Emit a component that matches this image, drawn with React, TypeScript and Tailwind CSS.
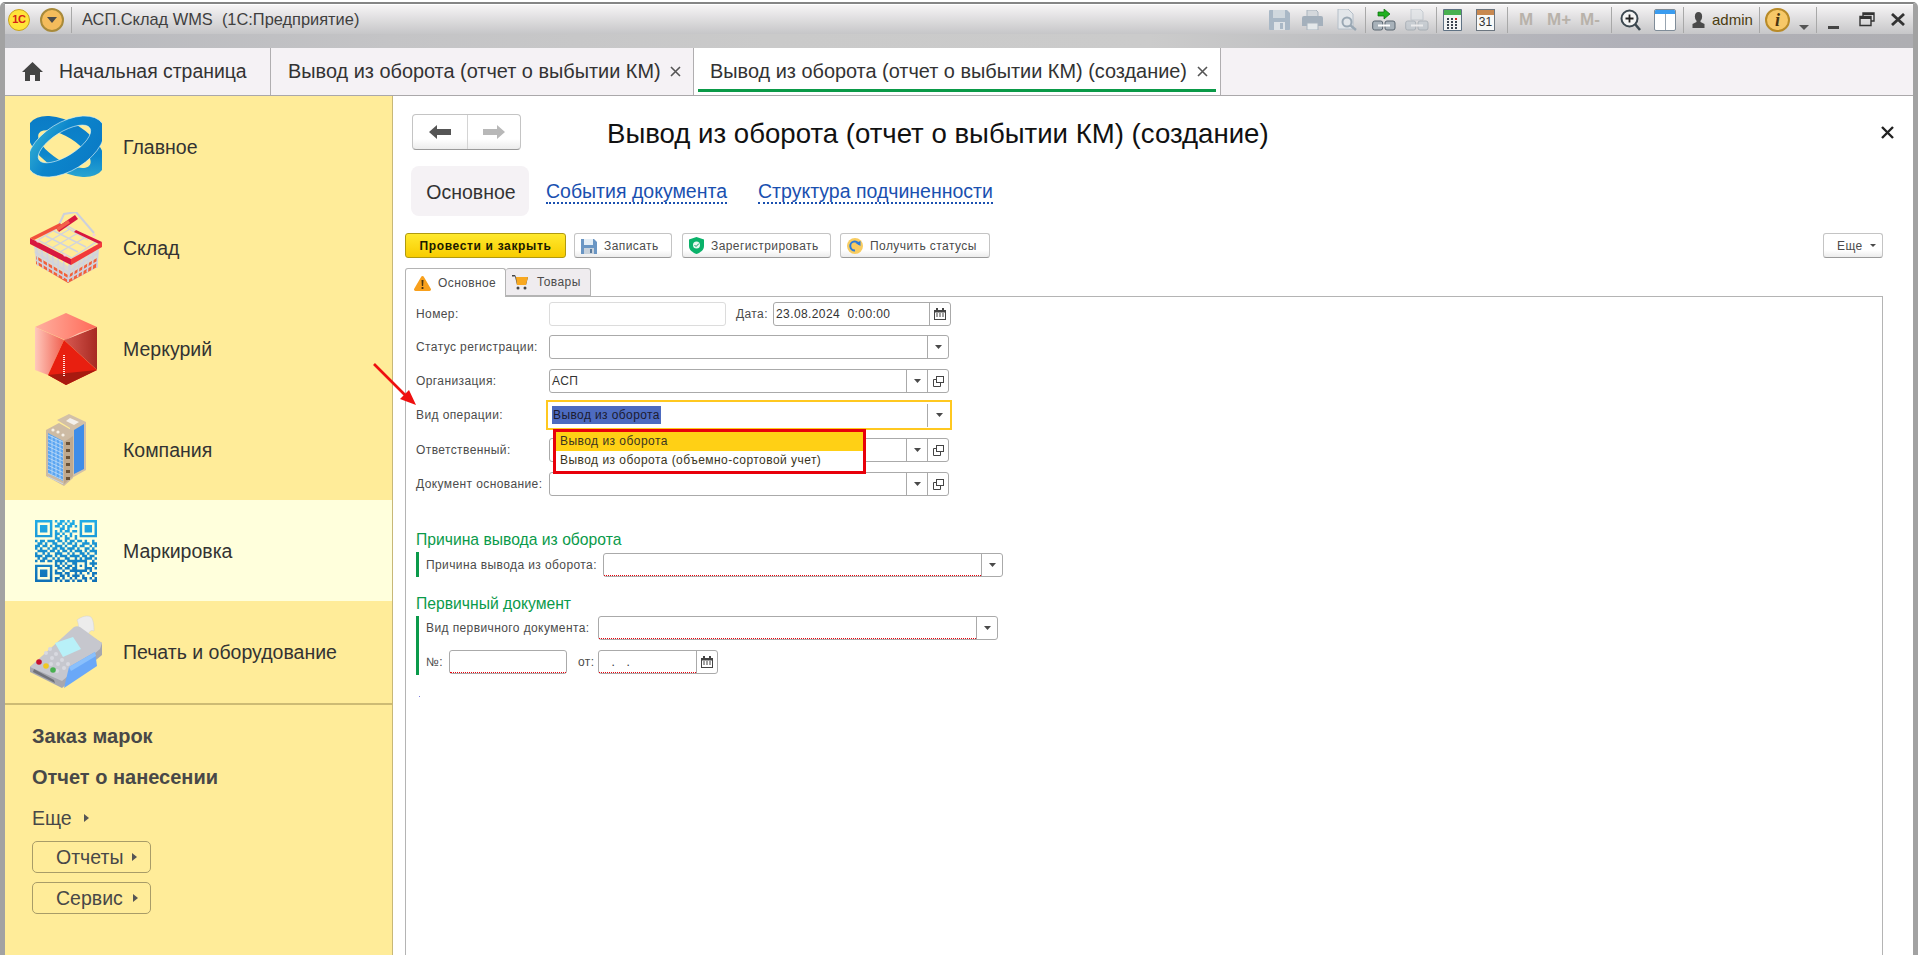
import type { ReactNode } from "react";

const Drop = () => (
  <svg width="7" height="4" viewBox="0 0 7 4"><path d="M0 0h7L3.5 4z" fill="#4a4a4a" /></svg>
);

const OpenIcon = () => (
  <svg width="11" height="11" viewBox="0 0 11 11" fill="none" stroke="#444" strokeWidth="1">
    <rect x="3.5" y="0.5" width="7" height="6" />
    <path d="M3.5 3.5h-3v7h7v-3.5" />
  </svg>
);

const CalendarIcon = () => (
  <svg width="12" height="12" viewBox="0 0 12 12">
    <path d="M0 2h12v10H0z" fill="#444" />
    <path d="M2 0h2v2H2zM8 0h2v2H8z" fill="#444" />
    <path d="M1 4.5h10V11H1z" fill="#fff" />
    <path d="M2 5.5h2v1H2zM5 5.5h2v1H5zM8 5.5h2v1H8zM2 7.5h2v1H2zM5 7.5h2v1H5zM8 7.5h2v1H8z" fill="#444" />
  </svg>
);

function Field({
  className,
  text,
  buttons = [],
  required,
  light,
}: {
  className: string;
  text?: ReactNode;
  buttons?: ("drop" | "open" | "cal")[];
  required?: boolean;
  light?: boolean;
}) {
  return (
    <div className={`flex h-[24px] shrink-0 rounded-[3px] border bg-white ${light ? "border-[#dcdcdc]" : "border-[#aaaaaa]"} ${className}`}>
      <div className="relative flex min-w-0 flex-1 items-center pl-[2px] whitespace-pre text-[#333]">
        {text}
        {required && <div className="absolute right-0 bottom-0 left-0 border-b border-dotted border-[#e8000a]" />}
      </div>
      {buttons.map((b, i) => (
        <div key={i} className="flex w-[21px] items-center justify-center border-l border-[#aaaaaa]">
          {b === "drop" && <Drop />}
          {b === "open" && <OpenIcon />}
          {b === "cal" && <CalendarIcon />}
        </div>
      ))}
    </div>
  );
}

const Label = ({ className, children }: { className: string; children: ReactNode }) => (
  <div className={`shrink-0 whitespace-nowrap text-[#4b4b4b] ${className}`}>{children}</div>
);

function GlobeIcon() {
  const ring = "M-43 0A43 24 0 1 1 43 0A43 24 0 1 1-43 0ZM-30 3A30 12 0 1 0 30 3A30 12 0 1 0-30 3Z";
  return (
    <svg width="72" height="63" viewBox="0 0 72 63">
      <defs>
        <linearGradient id="gb" x1="0" y1="0" x2="1" y2="1">
          <stop offset="0" stopColor="#0a78c4" />
          <stop offset="0.6" stopColor="#0c86cc" />
          <stop offset="1" stopColor="#3bb6d4" />
        </linearGradient>
      </defs>
      <g transform="translate(36 31.500)">
        <path d={ring} fill="url(#gb)" fillRule="evenodd" transform="rotate(32)" />
        <path d={ring} fill="url(#gb)" fillRule="evenodd" stroke="#d8f0f4" strokeWidth="0.6" transform="rotate(148)" />
      </g>
    </svg>
  );
}

function BasketIcon() {
  const wires = [];
  for (let i = 0; i < 7; i++) {
    wires.push(<path key={`a${i}`} d={`M${6 + i * 5.6} ${28 + i * 3.4}L${8 + i * 5} ${54 + i * 2.6}`} />);
    wires.push(<path key={`b${i}`} d={`M${41 + i * 4.6} ${50 - i * 3.2}L${38 + i * 4.8} ${70 - i * 2.4}`} />);
  }
  return (
    <svg width="72" height="72" viewBox="0 0 72 72">
      <path d="M28 15L34 2L46 0L64 21" fill="none" stroke="#ccd0dc" strokeWidth="2" />
      <g stroke="#d0d3de" strokeWidth="1.4" fill="none">
        <path d="M8 28L34 12L66 30L42 46Z" />
        <path d="M16 24L48 40M24 19L56 35M34 14L58 28M14 32L40 17M22 36L48 21M30 40L56 25" />
      </g>
      <path d="M4 34L38 54L68 34L68 55L38 71L6 52Z" fill="#d0d3de" opacity="0.75" />
      <path d="M6 44L38 63L67 46L67 55L38 71L6 52Z" fill="#f2603a" />
      <g stroke="#d0d3de" strokeWidth="1.6" fill="none">
        {wires}
        <path d="M5 40L38 60L68 41M6 48L38 67L67 50" />
      </g>
      <path d="M0 26L41 47V53L0 32Z" fill="#d8183f" />
      <path d="M41 47L72 30V35L41 53Z" fill="#f23a3a" />
      <path d="M0 26L30 11L32 14L4 28Z" fill="#f2503c" />
      <path d="M46 18L72 30L69 32L44 20Z" fill="#d8183f" />
      <path d="M26 16L45 3L48 7L29 20Z" fill="#d8183f" />
      <path d="M26 16L38 8L40 11L28 19Z" fill="#f2604a" />
      <circle cx="8" cy="29" r="1.6" fill="#f8d0d8" />
      <circle cx="35" cy="43" r="1.6" fill="#f8d0d8" />
      <circle cx="64" cy="23" r="1.6" fill="#f8d0d8" />
    </svg>
  );
}

function CubeIcon() {
  return (
    <svg width="62" height="72" viewBox="0 0 62 72">
      <defs>
        <linearGradient id="c1" x1="0" y1="0" x2="1" y2="0"><stop offset="0" stopColor="#ffb0a0" /><stop offset="1" stopColor="#ff6a58" /></linearGradient>
        <linearGradient id="c2" x1="0" y1="0" x2="1" y2="0"><stop offset="0" stopColor="#d85a52" /><stop offset="1" stopColor="#a82a22" /></linearGradient>
        <linearGradient id="c3" x1="0" y1="0" x2="1" y2="0"><stop offset="0" stopColor="#ffc8bc" /><stop offset="1" stopColor="#f06050" /></linearGradient>
      </defs>
      <path d="M31 0L62 14L30 27L0 14Z" fill="url(#c1)" />
      <path d="M62 14V57L29 27Z" fill="url(#c2)" />
      <path d="M0 14L29 27L13 62L0 57Z" fill="url(#c3)" />
      <path d="M29 27L62 57L31 72L13 62Z" fill="#e81f10" />
      <path d="M13 62L62 57L31 72Z" fill="#a81a10" />
      <path d="M30 27L62 14L44 20Z" fill="#ffe0c8" opacity="0.8" />
      <path d="M29 42V63" stroke="#ffe6e0" strokeWidth="2" strokeDasharray="1 1" />
    </svg>
  );
}

function BuildingIcon() {
  const front = [];
  for (let r = 0; r < 12; r++) {
    front.push(<path key={r} d={`M2 ${21 + r * 3.8}L17 ${28 + r * 3.8}`} stroke="#cfe4f8" strokeWidth="0.7" />);
  }
  return (
    <svg width="40" height="72" viewBox="0 0 40 72">
      <path d="M11 6L23 0L40 8V56L24 65V14Z" fill="#d2c0a8" />
      <path d="M28 16L38 10V55L28 60Z" fill="#3f8de8" />
      <path d="M0 16L13 9L27 17V64L18 72L0 62Z" fill="#cdbba4" />
      <path d="M2 19L17 27V67L2 59Z" fill="#5aa5f2" />
      {front}
      <path d="M6 22V60M10 24V62M14 26V65" stroke="#cfe4f8" strokeWidth="0.7" />
      <path d="M18 28L27 22V62L18 70Z" fill="#bfa98e" />
      <path d="M20 28h4v3h-4zM20 35h4v3h-4zM20 42h4v3h-4zM20 49h4v3h-4zM20 56h4v3h-4zM20 63h4v3h-4z" fill="#6a5238" />
      <path d="M24 4L33 8L28 11L20 7Z" fill="#f4f0ea" />
      <circle cx="7" cy="16" r="1.6" fill="#f6f0e6" />
      <circle cx="12" cy="18" r="1.6" fill="#f6f0e6" />
      <circle cx="17" cy="21" r="1.6" fill="#f6f0e6" />
    </svg>
  );
}

const QR_ROWS = [
  "1111111010110101001111111",
  "1000001001101011001000001",
  "1011101011010110101011101",
  "1011101000110100001011101",
  "1011101010101101101011101",
  "1000001011010010001000001",
  "1111111010101010101111111",
  "0000000011001100100000000",
  "1011011101101011011010010",
  "0110100110010110100111011",
  "1101101011101001101100101",
  "1010010110110111010011010",
  "0111101101011010111010111",
  "1001010011100101001101001",
  "1110111010111011110110110",
  "0101100101001100101011101",
  "1011011011110111111110010",
  "0000000010101001100010111",
  "1111111011010110101010010",
  "1000001001101101100011101",
  "1011101010010011111110100",
  "1011101011101100101001011",
  "1011101000110101110100010",
  "1000001011010010100110101",
  "1111111010101101011010011",
];

function QrIcon() {
  let d = "";
  QR_ROWS.forEach((row, y) => {
    row.split("").forEach((c, x) => {
      if (c === "1") d += `M${x} ${y}h1v1h-1z`;
    });
  });
  return (
    <svg width="62" height="62" viewBox="0 0 25 25">
      <defs>
        <linearGradient id="qr" x1="0" y1="0" x2="0" y2="1">
          <stop offset="0" stopColor="#22ace6" />
          <stop offset="1" stopColor="#1070b6" />
        </linearGradient>
      </defs>
      <path d={d} fill="url(#qr)" />
    </svg>
  );
}

function PosIcon() {
  return (
    <svg width="72" height="73" viewBox="0 0 72 73">
      <path d="M47 5C52 1 58 0 61 2C64 6 64 12 64 16C60 14 58 18 57 25L46 20C49 14 49 9 47 5Z" fill="#ececec" stroke="#d0d0d0" strokeWidth="0.5" />
      <path d="M0 52V57L32 73L72 40V28L46 12Z" fill="#a6a7af" />
      <path d="M0 52L44 12C46 11 48 11 50 12L72 28L70 34L32 66Z" fill="#c6c7ce" />
      <path d="M3 57L25 68L24 65L4 54Z" fill="#70727a" />
      <path d="M34 73L39 52L65 37L67 51Z" fill="#6aa8f8" />
      <path d="M39 52L65 37L66 41L41 56Z" fill="#8ac0fc" />
      <path d="M25 28L43 22L51 34L33 42Z" fill="#b8f0f8" />
      <g fill="#d8d9e0">
        <circle cx="20" cy="34" r="2" /><circle cx="26" cy="39" r="2" /><circle cx="32" cy="45" r="2" /><circle cx="38" cy="49" r="2" />
        <circle cx="16" cy="38" r="2" /><circle cx="22" cy="43" r="2" /><circle cx="28" cy="49" r="2" /><circle cx="34" cy="53" r="2" />
        <circle cx="27" cy="56" r="2" /><circle cx="21" cy="49" r="2" />
      </g>
      <circle cx="9" cy="47" r="2.800" fill="#c8102e" />
      <circle cx="16" cy="51" r="2.800" fill="#f0c820" />
      <circle cx="23" cy="55" r="2.800" fill="#48b050" />
    </svg>
  );
}

const modules = [
  { label: "Главное", icon: <GlobeIcon /> },
  { label: "Склад", icon: <BasketIcon /> },
  { label: "Меркурий", icon: <CubeIcon /> },
  { label: "Компания", icon: <BuildingIcon /> },
  { label: "Маркировка", icon: <QrIcon />, active: true },
  { label: "Печать и оборудование", icon: <PosIcon /> },
];

const Tri = () => (
  <svg width="5" height="8" viewBox="0 0 5 8"><path d="M0 0l5 4-5 4z" fill="#555" /></svg>
);

const Sep = ({ className }: { className: string }) => <div className={`h-[26px] w-px shrink-0 bg-[#a8a8a8] ${className}`} />;

function Toolbar() {
  return (
    <div className="flex items-center">
      {/* save */}
      <svg width="21" height="20" viewBox="0 0 21 20"><path d="M0 1a1 1 0 011-1h17l3 3v16a1 1 0 01-1 1H1a1 1 0 01-1-1z" fill="#a9b8c6" /><path d="M4 0h12v8H4z" fill="#d0d8de" /><path d="M5 12h11v8H5z" fill="#dde2e6" /><path d="M11 13h3v6h-3z" fill="#a9b8c6" /></svg>
      {/* print */}
      <svg className="ml-[12px]" width="21" height="20" viewBox="0 0 21 20"><path d="M5 0h9l2 2v6H5z" fill="#d4d8dc" stroke="#a9b4be" /><path d="M0 8a2 2 0 012-2h17a2 2 0 012 2v8H0z" fill="#a4b0bc" /><path d="M5 13h11v7H5z" fill="#e4e8ea" stroke="#a9b4be" /></svg>
      {/* preview */}
      <svg className="ml-[14px]" width="22" height="22" viewBox="0 0 22 22" fill="none"><path d="M1 0h10l5 5v15H1z" fill="#e2e6ea" stroke="#b4bec8" /><circle cx="10" cy="13" r="4.5" stroke="#9aa8b4" strokeWidth="2" /><path d="M13 16l6 5" stroke="#9aa8b4" strokeWidth="2.4" /></svg>
      <Sep className="ml-[6px]" />
      {/* link with green arrow */}
      <svg className="ml-[6px]" width="24" height="22" viewBox="0 0 24 22"><path d="M12 0l6 5-6 5V7H6V3h6z" fill="#20b020" stroke="#0a6a0a" strokeWidth="0.7" /><rect x="0.7" y="12" width="10" height="9" rx="2" fill="#a8b2ba" stroke="#5a6670" /><rect x="13" y="12" width="10" height="9" rx="2" fill="#a8b2ba" stroke="#5a6670" /><path d="M6 16.5h12" stroke="#fff" strokeWidth="2" /></svg>
      <svg className="ml-[9px]" width="24" height="22" viewBox="0 0 24 22" opacity="0.55"><path d="M6 0h9l3 3v8H6z" fill="#dde2e6" stroke="#a9b4be" /><rect x="0.7" y="12" width="10" height="9" rx="2" fill="#bcc6ce" stroke="#8a96a0" /><rect x="13" y="12" width="10" height="9" rx="2" fill="#bcc6ce" stroke="#8a96a0" /><path d="M6 16.5h12" stroke="#fff" strokeWidth="2" /></svg>
      <Sep className="ml-[7px]" />
      {/* calculator */}
      <svg className="ml-[6px]" width="19" height="22" viewBox="0 0 19 22"><path d="M0.5 0.5h18v21H0.5z" fill="#f2f4f4" stroke="#5f7284" /><path d="M1 1h17v5H1z" fill="#48b050" /><g fill="#3a4450"><path d="M4 9h2v2H4zM8 9h2v2H8zM4 12h2v2H4zM8 12h2v2H8zM4 15h2v2H4zM8 15h2v2H8zM4 18h2v2H4zM8 18h2v2H8zM12 12h2v2h-2zM12 15h2v2h-2zM12 18h2v2h-2z" /></g><path d="M12 9h2v2h-2z" fill="#d02020" /></svg>
      {/* day calendar */}
      <div className="ml-[14px] flex h-[22px] w-[19px] flex-col overflow-hidden border border-[#6c7680] bg-[#f7f8f8]">
        <div className="h-[5px] bg-[#c88850]" />
        <div className="flex-1 text-center text-[12px] leading-[15px] text-[#333]">31</div>
      </div>
      <Sep className="ml-[12px]" />
      <div className="ml-[11px] w-[15px] text-[17px] leading-none font-bold text-[#b8b2aa]">M</div>
      <div className="ml-[13px] w-[24px] text-[17px] leading-none font-bold whitespace-nowrap text-[#b8b2aa]">M+</div>
      <div className="ml-[9px] w-[24px] text-[17px] leading-none font-bold whitespace-nowrap text-[#b8b2aa]">M-</div>
      <Sep className="ml-[7px]" />
      {/* zoom */}
      <svg className="ml-[8px]" width="21" height="22" viewBox="0 0 21 22" fill="none"><circle cx="9.5" cy="9.5" r="8" fill="#f4f4f4" stroke="#3c4850" strokeWidth="2" /><path d="M5.5 9.5h8M9.5 5.5v8" stroke="#222" strokeWidth="1.8" /><path d="M15 15l5 6" stroke="#3c4850" strokeWidth="2.6" /></svg>
      {/* panels */}
      <div className="ml-[13px] flex h-[22px] w-[22px] flex-col overflow-hidden rounded-[2px] border border-[#7f8c98] bg-white">
        <div className="h-[4px] bg-[#3a9cf0]" />
        <div className="ml-[10px] flex-1 border-l border-[#98a4b0]" />
      </div>
      <Sep className="ml-[7px]" />
      {/* user */}
      <svg className="ml-[8px]" width="13" height="16" viewBox="0 0 13 16"><ellipse cx="6.5" cy="4.5" rx="3.6" ry="4.5" fill="#4a4a4a" /><path d="M4.5 8h4v2l4 2v4H0.500v-4l4-2z" fill="#4a4a4a" /></svg>
      <div className="ml-[7px] w-[41px] text-[15px] leading-none text-[#4a3c10]">admin</div>
      <Sep className="ml-[6px]" />
      <div className="ml-[5px] flex h-[24px] w-[25px] items-center justify-center rounded-full border-2 border-[#b88a28] bg-[#f7c868] font-['Liberation_Serif',serif] text-[18px] leading-none font-bold text-[#4a3410] italic">i</div>
      <svg className="mt-[16px] ml-[9px]" width="10" height="5" viewBox="0 0 10 5"><path d="M0 0h10L5 5z" fill="#555" /></svg>
      <Sep className="ml-[7px]" />
      <div className="mt-[16px] ml-[11px] h-[3px] w-[11px] bg-[#444]" />
      <svg className="ml-[20px]" width="16" height="15" viewBox="0 0 16 15" fill="none" stroke="#333" strokeWidth="1.4"><path d="M4 4V1h11v8h-3" /><path d="M1 4.500h11v9H1z" /><path d="M1 6h11M4 2h11" strokeWidth="2" /></svg>
      <svg className="ml-[16px]" width="14" height="13" viewBox="0 0 14 13" stroke="#333" strokeWidth="2.8"><path d="M1 1l12 11M13 1L1 12" /></svg>
    </div>
  );
}

const ToolButton = ({ className, icon, children }: { className: string; icon: ReactNode; children: ReactNode }) => (
  <div className={`flex h-[25px] items-center rounded-[3px] border border-[#c4c4c4] border-b-[#9a9a9a] bg-[linear-gradient(#ffffff_70%,#ececec)] pl-[6px] text-[#4b4b4b] ${className}`}>
    {icon}
    <span className="whitespace-nowrap">{children}</span>
  </div>
);

export default function App() {
  return (
    <div className="relative h-[955px] w-[1919px] overflow-hidden bg-white pt-[2px] pr-px font-['Liberation_Sans',Arial,sans-serif] text-[12px]">
      <div className="flex h-[953px] flex-col overflow-hidden rounded-t-[5px] border-t-2 border-r-[5px] border-l-[5px] border-[#a2a2a2] border-t-[#858585]">
        {/* title bar */}
        <div className="flex h-[30px] shrink-0 items-center justify-between border-t border-white bg-[linear-gradient(#f6f4f5,#c6c6c8)] pr-[8px] pl-[3px]">
          <div className="flex items-center">
            <div className="flex h-[22px] w-[22px] items-center justify-center rounded-full border border-[#c8a020] bg-[#ffe43a] text-[11px] font-bold tracking-tight text-[#d42218]">1С</div>
            <div className="ml-[10px] flex h-[24px] w-[24px] items-center justify-center rounded-full border-2 border-[#a88a3a] bg-[#f4bc5c]">
              <svg width="10" height="6" viewBox="0 0 10 6"><path d="M0 0h10L5 6z" fill="#4a4a4a" /></svg>
            </div>
            <div className="ml-[7px] h-[26px] w-px bg-[#a8a8a8]" />
            <div className="ml-[10px] text-[16.4px] whitespace-pre text-[#3f3f3f]">АСП.Склад WMS  (1С:Предприятие)</div>
          </div>
          <Toolbar />
        </div>
        <div className="h-[14px] shrink-0 bg-[linear-gradient(90deg,#b6b7bc,#c4c4c6_20%,#cacaca_40%,#cbcbcb_60%,#b8b9bd_75%,#b0b0b8_85%,#aeaeb2)]" />

        {/* open windows */}
        <div className="flex h-[48px] shrink-0 items-stretch border-b border-[#aaa8aa] bg-[#f5f2f5] text-[19.9px] text-[#333]">
          <div className="flex w-[266px] items-center border-r border-[#b0aeb0] pl-[17px] text-[19.4px]">
            <svg width="21" height="19" viewBox="0 0 21 19"><path d="M10.500 0L21 10h-3v9h-5v-6H8v6H3v-9H0z" fill="#444" /></svg>
            <span className="ml-[16px] whitespace-nowrap">Начальная страница</span>
          </div>
          <div className="flex w-[423px] items-center justify-between border-r border-[#b0aeb0] pr-[12px] pl-[17px]">
            <span className="whitespace-nowrap">Вывод из оборота (отчет о выбытии КМ)</span>
            <svg width="11" height="11" viewBox="0 0 11 11" stroke="#555" strokeWidth="1.600"><path d="M1 1l9 9M10 1l-9 9" /></svg>
          </div>
          <div className="relative flex w-[527px] items-center justify-between border-r border-[#b0aeb0] bg-white pr-[12px] pl-[16px]">
            <span className="whitespace-nowrap">Вывод из оборота (отчет о выбытии КМ) (создание)</span>
            <svg width="11" height="11" viewBox="0 0 11 11" stroke="#555" strokeWidth="1.600"><path d="M1 1l9 9M10 1l-9 9" /></svg>
            <div className="absolute right-[4px] bottom-[3px] left-[4px] h-[3px] bg-[#0a9a48]" />
          </div>
        </div>

        <div className="flex min-h-0 flex-1">
          {/* sections panel */}
          <div className="flex w-[388px] shrink-0 flex-col border-r border-[#c8b878] bg-[#ffec99] text-[#333]">
            <div className="shrink-0">
              {modules.map((m) => (
                <div key={m.label} className={`flex h-[101px] items-center ${m.active ? "bg-[#ffffdc]" : ""}`}>
                  <div className="flex w-[118px] items-center justify-center pr-[20px] pl-[24px]">
                    <div className="flex w-[72px] shrink-0 justify-center">{m.icon}</div>
                  </div>
                  <span className="pt-[2px] text-[19.5px] whitespace-nowrap">{m.label}</span>
                </div>
              ))}
            </div>
            <div className="mt-px h-[2px] shrink-0 bg-[#cdbb74]" />
            <div className="pt-[20px] pl-[27px] text-[19.5px] leading-[22px] text-[#484848]">
              <div className="text-[20px] font-bold">Заказ марок</div>
              <div className="mt-[19px] text-[20px] font-bold">Отчет о нанесении</div>
              <div className="mt-[19px] flex items-center">
                Еще
                <span className="ml-[12px]"><Tri /></span>
              </div>
              <div className="mt-[12px] flex h-[32px] w-[119px] items-center rounded-[5px] border border-[#a89c68] pl-[23px]">
                Отчеты
                <span className="ml-[9px]"><Tri /></span>
              </div>
              <div className="mt-[9px] flex h-[32px] w-[119px] items-center rounded-[5px] border border-[#a89c68] pl-[23px]">
                Сервис
                <span className="ml-[10px]"><Tri /></span>
              </div>
            </div>
          </div>

          {/* form */}
          <div className="flex min-w-0 flex-1 flex-col pr-[30px] pl-[12px]">
            <div className="mt-[18px] flex h-[36px] shrink-0 items-center">
              <div className="ml-[7px] flex h-[36px] w-[109px] rounded-[4px] border border-[#c4c4c4] border-b-[#9a9a9a] bg-[linear-gradient(#ffffff_70%,#ececec)]">
                <div className="flex w-[55px] items-center justify-center border-r border-[#d4d4d4]">
                  <svg width="22" height="14" viewBox="0 0 22 14"><path d="M0 7l8-7v4h14v6H8v4z" fill="#555" /></svg>
                </div>
                <div className="flex flex-1 items-center justify-center">
                  <svg width="22" height="14" viewBox="0 0 22 14"><path d="M22 7l-8-7v4H0v6h14v4z" fill="#b8b8b8" /></svg>
                </div>
              </div>
              <div className="ml-[86px] flex-1 pt-[4px] text-[27.6px] whitespace-nowrap text-[#111]">Вывод из оборота (отчет о выбытии КМ) (создание)</div>
              <svg className="-mr-[11px]" width="13" height="13" viewBox="0 0 13 13" stroke="#222" strokeWidth="2.400"><path d="M1 1l11 11M12 1L1 12" /></svg>
            </div>

            <div className="mt-[16px] ml-[6px] flex h-[50px] shrink-0 items-center text-[19.5px]">
              <div className="flex h-full w-[118px] items-center justify-center rounded-[8px] bg-[#f5f2f5] pt-[3px] pl-[2px] text-[#333]">Основное</div>
              <div className="mt-[3px] ml-[17px] border-b-2 border-dotted border-[#1a50b0] leading-[21px] whitespace-nowrap text-[#1a50b0]">События документа</div>
              <div className="mt-[3px] ml-[31px] border-b-2 border-dotted border-[#1a50b0] leading-[21px] whitespace-nowrap text-[#1a50b0]">Структура подчиненности</div>
            </div>

            <div className="mt-[17px] flex shrink-0 items-center tracking-[0.42px]">
              <div className="flex h-[25px] w-[161px] items-center justify-center rounded-[3px] border border-[#b09a10] bg-[linear-gradient(#ffe92e,#f8cc00)] font-bold tracking-[0.65px] text-[#1a1a00]">Провести и закрыть</div>
              <ToolButton className="ml-[8px] w-[98px]" icon={
                <svg className="mr-[7px]" width="16" height="16" viewBox="0 0 16 16"><path d="M0 1h13l3 3v12H0z" fill="#6a96c4" /><path d="M3 1h9v6H3z" fill="#e4eef6" /><path d="M3 10h10v6H3z" fill="#c8d2dc" /><path d="M9 11h2v4H9z" fill="#5a7a9c" /></svg>
              }>Записать</ToolButton>
              <ToolButton className="ml-[10px] w-[149px]" icon={
                <svg className="mr-[7px]" width="15" height="17" viewBox="0 0 15 17"><path d="M7.500 0L15 2.500V9c0 4-3.500 6.500-7.500 8C3.500 15.500 0 13 0 9V2.500z" fill="#0ab26a" /><circle cx="7.500" cy="8" r="3.500" fill="#e8f8f0" /><path d="M5.500 8l1.500 1.500L10 6.500" stroke="#0a9a5a" fill="none" /></svg>
              }>Зарегистрировать</ToolButton>
              <ToolButton className="ml-[9px] w-[150px]" icon={
                <svg className="mr-[7px]" width="16" height="16" viewBox="0 0 16 16" fill="none"><circle cx="8" cy="8" r="8" fill="#f8cc60" /><path d="M12 6.500A4.500 4.500 0 108 12.500" stroke="#2a7ad8" strokeWidth="2" /><path d="M8.500 5l5-2v5z" fill="#2a7ad8" /></svg>
              }>Получить статусы</ToolButton>
              <div className="ml-auto flex h-[25px] w-[60px] items-center rounded-[3px] border border-[#c4c4c4] border-b-[#9a9a9a] bg-[linear-gradient(#ffffff_70%,#ececec)] pl-[13px] text-[#4b4b4b]">
                Еще
                <span className="ml-[7px]"><svg width="6" height="3" viewBox="0 0 6 3"><path d="M0 0h6L3 3z" fill="#4a4a4a" /></svg></span>
              </div>
            </div>

            <div className="relative z-10 mt-[10px] -mb-px flex h-[29px] shrink-0 items-stretch tracking-[0.4px]">
              <div className="flex w-[101px] items-center rounded-t-[3px] border border-b-0 border-[#b4b4b4] bg-white pl-[8px] text-[#4b4b4b]">
                <svg className="mr-[7px]" width="17" height="15" viewBox="0 0 17 15"><path d="M8.500 0a1.500 1.500 0 011.300.8l7 12A1.500 1.500 0 0115.500 15h-14A1.500 1.500 0 01.200 12.800l7-12A1.500 1.500 0 018.500 0z" fill="#f8a01c" /><path d="M7.500 4h2l-.4 6H7.900zM7.600 11h1.800v2H7.600z" fill="#4a3410" /></svg>
                Основное
              </div>
              <div className="flex h-[28px] w-[85px] items-center rounded-t-[3px] border border-l-0 border-[#b4b4b4] bg-[#efecef] pl-[6px] text-[#4b4b4b]">
                <svg className="mr-[9px]" width="16" height="15" viewBox="0 0 16 15"><path d="M0 0h3l1 2h12l-2 8H5L3 1.500H0z" fill="#444" /><path d="M4 2h12l-2 8H5z" fill="#f8a820" /><circle cx="6" cy="13" r="1.500" fill="#444" /><circle cx="13" cy="13" r="1.500" fill="#444" /></svg>
                Товары
              </div>
            </div>

            <div className="relative flex min-h-0 flex-1 flex-col border border-b-0 border-[#b4b4b4] pt-[5px] pl-[10px] tracking-[0.4px]">
              <div className="flex items-center">
                <Label className="w-[133px]">Номер:</Label>
                <Field light className="w-[177px]" />
                <Label className="ml-[10px] w-[37px]">Дата:</Label>
                <Field className="w-[178px]" text="23.08.2024  0:00:00" buttons={["cal"]} />
              </div>
              <div className="mt-[9px] flex items-center">
                <Label className="w-[133px]">Статус регистрации:</Label>
                <Field className="w-[400px]" buttons={["drop"]} />
              </div>
              <div className="mt-[10px] flex items-center">
                <Label className="w-[133px]">Организация:</Label>
                <Field className="w-[400px]" text="АСП" buttons={["drop", "open"]} />
              </div>
              <div className="mt-[7px] flex items-center">
                <Label className="w-[130px]">Вид операции:</Label>
                <div className="flex h-[30px] w-[406px] items-center border-2 border-[#ffc820] bg-white pl-[4px]">
                  <span className="flex-1"><span className="bg-[#4d6bc0] px-px py-[2px] text-[#1c1c30]">Вывод из оборота</span></span>
                  <div className="flex h-[23px] w-[23px] items-center justify-center border-l border-[#aaaaaa]"><Drop /></div>
                </div>
              </div>
              <div className="mt-[8px] flex items-center">
                <Label className="w-[133px]">Ответственный:</Label>
                <Field className="w-[400px]" buttons={["drop", "open"]} />
              </div>
              <div className="mt-[10px] flex items-center">
                <Label className="w-[133px]">Документ основание:</Label>
                <Field className="w-[400px]" buttons={["drop", "open"]} />
              </div>

              <div className="mt-[34px] h-[20px] text-[15.7px] leading-[20px] tracking-normal text-[#0a9a4a]">Причина вывода из оборота</div>
              <div className="mt-[2px] flex h-[25px] items-center border-l-[3px] border-[#0a9a4a] pl-[7px]">
                <Label className="w-[177px]">Причина вывода из оборота:</Label>
                <Field className="w-[400px]" buttons={["drop"]} required />
              </div>

              <div className="mt-[17px] h-[20px] text-[15.7px] leading-[20px] tracking-normal text-[#0a9a4a]">Первичный документ</div>
              <div className="mt-[2px] h-[59px] border-l-[3px] border-[#0a9a4a] pl-[7px]">
                <div className="flex items-center">
                  <Label className="w-[172px]">Вид первичного документа:</Label>
                  <Field className="w-[400px]" buttons={["drop"]} required />
                </div>
                <div className="mt-[10px] flex items-center">
                  <Label className="w-[23px]">№:</Label>
                  <Field className="w-[118px]" required />
                  <Label className="ml-[11px] w-[20px]">от:</Label>
                  <Field className="w-[120px]" text={<span className="ml-[3px]">  .   .</span>} buttons={["cal"]} required />
                </div>
              </div>
              <div className="mt-[21px] ml-[3px] h-px w-px bg-[#7c7ce0]" />

              {/* open list of the focused field */}
              <div className="absolute top-[132px] left-[147px] z-20 h-[45px] w-[313px] border-[3px] border-[#e8000a] bg-white tracking-[0.46px] text-[#3a3420]">
                <div className="h-[19px] bg-[#ffd015] pl-[4px] leading-[19px]">Вывод из оборота</div>
                <div className="h-[19px] pl-[4px] leading-[19px] whitespace-nowrap">Вывод из оборота (объемно-сортовой учет)</div>
              </div>
            </div>
          </div>
        </div>
      </div>

      {/* annotation arrow */}
      <svg className="absolute top-[360px] left-[370px] z-30" width="50" height="50" viewBox="0 0 50 50">
        <path d="M4 4L38 38" stroke="#ee1010" strokeWidth="2.600" />
        <path d="M46 45L30 39L39 30Z" fill="#ee1010" />
      </svg>
    </div>
  );
}
